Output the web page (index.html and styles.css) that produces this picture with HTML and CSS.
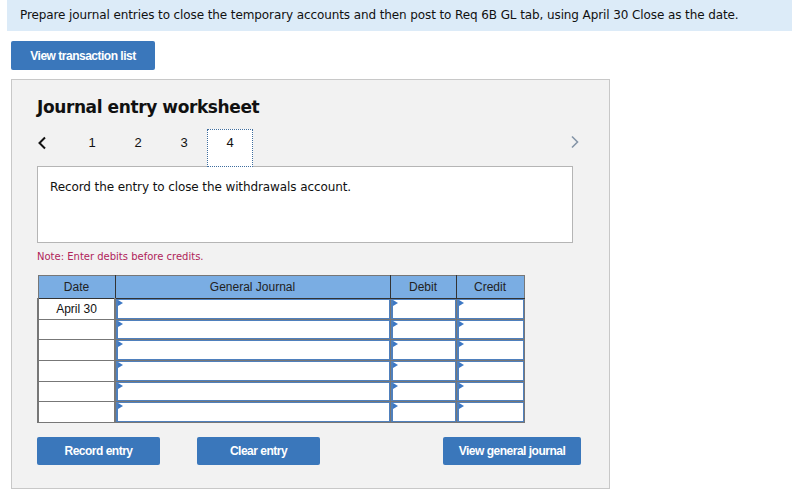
FILE: index.html
```html
<!DOCTYPE html>
<html lang="en">
<head>
    <meta charset="UTF-8">
    <title>Journal entry worksheet</title>
    <link rel="stylesheet" href="styles.css">
</head>
<body>

<div class="instructions">Prepare journal entries to close the temporary accounts and then post to Req 6B GL tab, using April 30 Close as the date.</div>

<button class="btn btn-list">View transaction list</button>

<div class="worksheet">
    <h1>Journal entry worksheet</h1>

    <!-- Entry navigation -->
    <div class="nav">
        <span class="nav-prev">
            <svg width="10" height="14" viewBox="0 0 10 14"><path d="M8 1.5 L2.5 7 L8 12.5" fill="none" stroke="#111" stroke-width="2"/></svg>
        </span>
        <span class="nav-num">1</span>
        <span class="nav-num">2</span>
        <span class="nav-num">3</span>
        <span class="nav-num active">4</span>
        <span class="nav-next">
            <svg width="10" height="14" viewBox="0 0 10 14"><path d="M2 1.5 L7.5 7 L2 12.5" fill="none" stroke="#8595a8" stroke-width="1.6"/></svg>
        </span>
    </div>

    <div class="prompt">Record the entry to close the withdrawals account.</div>

    <p class="note">Note: Enter debits before credits.</p>

    <table class="journal">
        <thead>
        <tr>
            <th class="col-date">Date</th>
            <th class="col-account">General Journal</th>
            <th class="col-debit">Debit</th>
            <th class="col-credit">Credit</th>
        </tr>
        </thead>
        <tbody>
        <tr>
            <td class="date">April 30</td>
            <td><div class="field"></div></td>
            <td><div class="field"></div></td>
            <td><div class="field"></div></td>
        </tr>
        <tr>
            <td class="date"></td>
            <td><div class="field"></div></td>
            <td><div class="field"></div></td>
            <td><div class="field"></div></td>
        </tr>
        <tr>
            <td class="date"></td>
            <td><div class="field"></div></td>
            <td><div class="field"></div></td>
            <td><div class="field"></div></td>
        </tr>
        <tr>
            <td class="date"></td>
            <td><div class="field"></div></td>
            <td><div class="field"></div></td>
            <td><div class="field"></div></td>
        </tr>
        <tr>
            <td class="date"></td>
            <td><div class="field"></div></td>
            <td><div class="field"></div></td>
            <td><div class="field"></div></td>
        </tr>
        <tr>
            <td class="date"></td>
            <td><div class="field"></div></td>
            <td><div class="field"></div></td>
            <td><div class="field"></div></td>
        </tr>
        </tbody>
    </table>

    <div class="actions">
        <button class="btn btn-record">Record entry</button>
        <button class="btn btn-clear">Clear entry</button>
        <button class="btn btn-view">View general journal</button>
    </div>
</div>

</body>
</html>
```

FILE: styles.css
```css
body {
    margin: 0;
    padding: 0;
    font-family: "DejaVu Sans", Verdana, sans-serif;
    background-color: #ffffff;
    color: #111;
}
.instructions {
    margin-left: 7px;
    height: 31px;
    line-height: 31px;
    padding-left: 13px;
    background-color: #dcebf8;
    font-size: 12px;
    letter-spacing: -0.1px;
}
.btn {
    display: block;
    height: 28px;
    padding: 0;
    border: none;
    border-radius: 2px;
    background-color: #3a77bb;
    color: #ffffff;
    font-family: "Liberation Sans", Arial, sans-serif;
    font-size: 12px;
    font-weight: bold;
    letter-spacing: -0.5px;
    cursor: pointer;
}
.btn-list {
    margin: 10px 0 0 11px;
    width: 144px;
    height: 29px;
}
.worksheet {
    margin: 9px 0 0 11px;
    width: 572px;
    height: 408px;
    padding: 0 0 0 25px;
    background-color: #f2f2f2;
    border: 1px solid #c8c8c8;
}
.worksheet h1 {
    margin: 16px 0 0 0;
    font-size: 17px;
    font-weight: bold;
    line-height: 22px;
    letter-spacing: -0.4px;
}
.nav {
    display: flex;
    align-items: flex-start;
    margin-top: 11px;
    height: 38px;
    width: 543px;
    position: relative;
    z-index: 1;
    margin-bottom: -1px;
}
.nav-prev {
    width: 32px;
    display: flex;
    padding-top: 7px;
}
.nav-num {
    width: 46px;
    text-align: center;
    font-family: "Liberation Sans", Arial, sans-serif;
    font-size: 13px;
    line-height: 15px;
    padding-top: 6px;
}
.nav-num.active {
    box-sizing: border-box;
    height: 38px;
    padding-top: 5px;
    background-color: #ffffff;
    border: 1px dotted #3f6d9e;
}
.nav-next {
    margin-left: auto;
    display: flex;
    padding-top: 6px;
}
.prompt {
    width: 522px;
    height: 62px;
    padding: 13px 0 0 12px;
    background-color: #ffffff;
    border: 1px solid #b5b5b5;
    font-size: 12px;
    letter-spacing: -0.1px;
}
.note {
    margin: 7px 0 0 0;
    font-size: 10px;
    color: #b0245a;
    line-height: 14px;
}
.journal {
    margin-top: 11px;
    border-collapse: collapse;
    font-family: "Liberation Sans", Arial, sans-serif;
    font-size: 12px;
}
.journal th {
    height: 22px;
    padding: 0;
    background-color: #7aade3;
    font-weight: normal;
    color: #222;
    border: 1px solid #333;
    border-top-color: #777;
}
.journal th:first-child {
    border-left-color: #777;
}
.journal th:last-child {
    border-right-color: #777;
}
.col-date { width: 76px; }
.col-account { width: 274px; }
.col-debit { width: 65px; }
.col-credit { width: 67px; }
.journal td {
    padding: 0;
    border: 1px solid #777;
    background-color: #ffffff;
}
.journal td.date {
    text-align: center;
    border-width: 1px 2px 1px 2px;
}
.journal tr:first-child td.date {
    border-top: none;
}
.field {
    position: relative;
    box-sizing: border-box;
    height: 19.67px;
    border: 1px solid #4f80bd;
    border-left-width: 2px;
}
.field::before {
    content: "";
    position: absolute;
    left: 0;
    top: 0;
    border-top: 3px solid transparent;
    border-bottom: 3px solid transparent;
    border-left: 5px solid #3d78c4;
}
.actions {
    display: flex;
    margin-top: 14px;
}
.btn-record {
    width: 123px;
}
.btn-clear {
    width: 123px;
    margin-left: 37px;
}
.btn-view {
    width: 138px;
    margin-left: 123px;
}
```
